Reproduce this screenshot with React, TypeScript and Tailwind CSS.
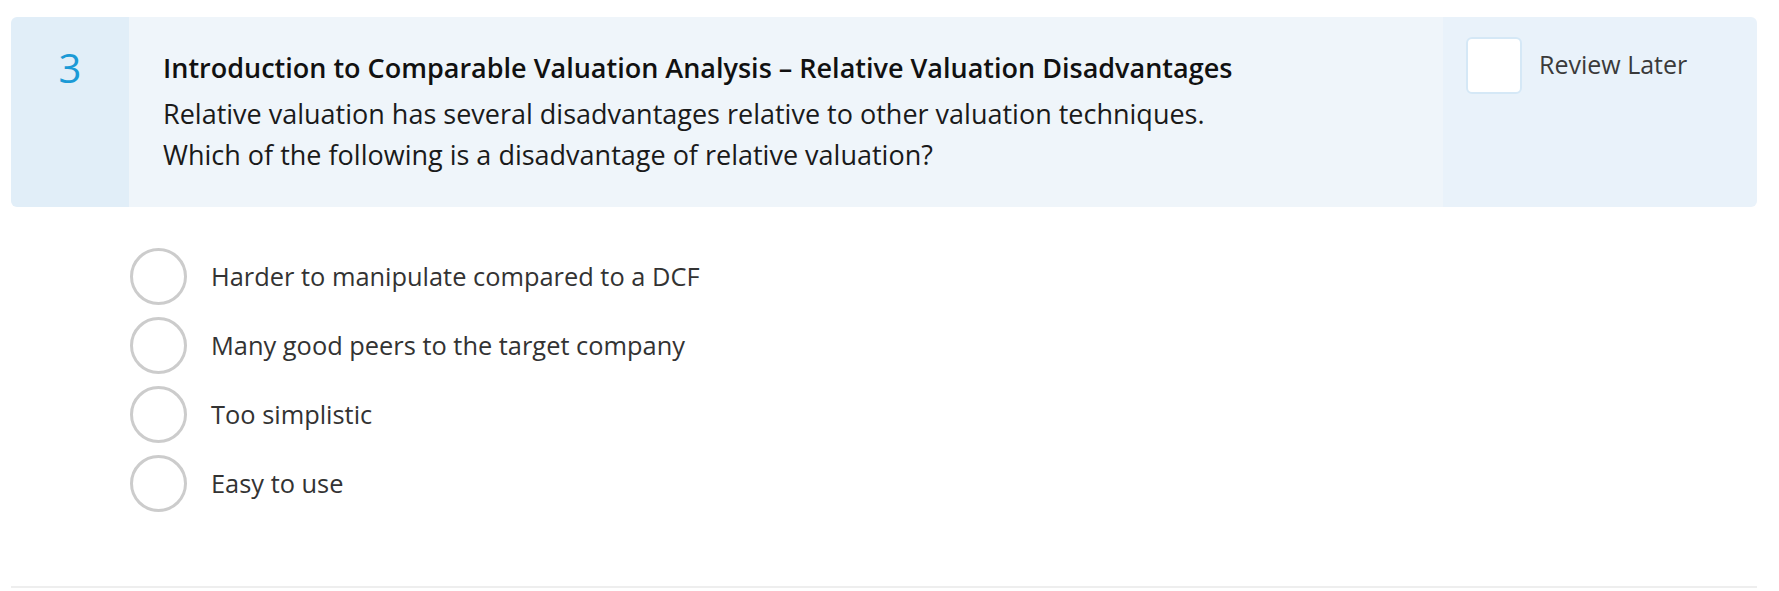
import React from 'react';

const options = [
  'Harder to manipulate compared to a DCF',
  'Many good peers to the target company',
  'Too simplistic',
  'Easy to use',
];

const QuestionCard: React.FC = () => {
  return (
    <div className="flex h-[190px] rounded-[6px] overflow-hidden">
      <div className="w-[118px] bg-[#e1eef8] flex justify-center pt-[31px]">
        <span className="text-[40px] leading-[40px] text-[#1b9ad6]">3</span>
      </div>
      <div className="flex-1 bg-[#eff5fa] pt-[33px] pl-[34px]">
        <h2 className="text-[27px] leading-[35px] font-semibold text-[#111111] mb-[8px]">
          Introduction to Comparable Valuation Analysis – Relative Valuation Disadvantages
        </h2>
        <p className="text-[27px] leading-[41px] text-[#1a1a1a]">
          Relative valuation has several disadvantages relative to other valuation techniques.
          <br />
          Which of the following is a disadvantage of relative valuation?
        </p>
      </div>
      <div className="w-[314px] bg-[#e9f2fa] flex items-start pt-[20px] pl-[23px]">
        <button className="w-[56px] h-[57px] border-2 border-[#d5e8f6] rounded-[6px] bg-white shrink-0" />
        <span className="ml-[17px] mt-[10px] text-[25px] leading-[35px] text-[#3a3a3a]">Review Later</span>
      </div>
    </div>
  );
};

export default function App() {
  return (
    <div className="bg-white w-[1779px] h-[591px] font-['Open_Sans',sans-serif]">
      <div className="ml-[11px] w-[1746px] pt-[17px]">
        <QuestionCard />
        <div className="flex flex-col gap-[12px] mt-[41px] pl-[119px]">
          {options.map((opt) => (
            <label key={opt} className="flex items-center h-[57px] cursor-pointer">
              <span className="w-[57px] h-[57px] rounded-full border-[3px] border-[#cccccc] bg-white shrink-0" />
              <span className="ml-[24px] text-[25.4px] leading-[35px] text-[#333333]">{opt}</span>
            </label>
          ))}
        </div>
        <div className="mt-[74px] h-[2px] bg-[#eeeeee]" />
      </div>
    </div>
  );
}
